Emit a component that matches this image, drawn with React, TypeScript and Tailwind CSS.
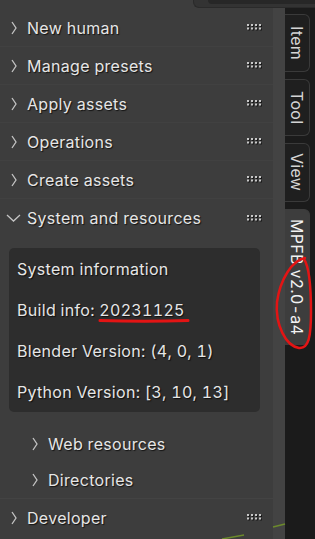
import React from "react";

const Chevron = ({ down = false }: { down?: boolean }) =>
  down ? (
    <svg width="15" height="8" viewBox="0 0 15 8" className="block">
      <polyline points="1,1 7.5,7 14,1" fill="none" stroke="#c4c4c4" strokeWidth="1.3" />
    </svg>
  ) : (
    <svg width="6" height="14" viewBox="0 0 6 14" className="block">
      <polyline points="1,1 5,7 1,13" fill="none" stroke="#c4c4c4" strokeWidth="1.3" />
    </svg>
  );

const Handle = () => (
  <svg width="15" height="7" viewBox="0 0 15 7" className="block">
    {[0, 4, 8, 12].map((x) =>
      [0, 3.5].map((y) => (
        <g key={`${x}-${y}`}>
          <rect x={x + 1} y={y + 1} width="2" height="2" fill="#1a1a1a" />
          <rect x={x} y={y} width="2" height="2" fill="#c8c8c8" />
        </g>
      ))
    )}
  </svg>
);

const txt =
  "text-[16px] tracking-[0.3px] tabular-nums text-[#e6e6e6] leading-none [text-shadow:1px_1px_1px_rgba(0,0,0,0.7)] whitespace-nowrap";

const Row = ({ label, down = false }: { label: string; down?: boolean }) => (
  <div className="flex items-center h-[38px] pr-[11px] border-b border-[#414141]">
    <div className="w-[27px] flex justify-center">
      <Chevron down={down} />
    </div>
    <span className={txt}>{label}</span>
    <div className="flex-1" />
    <Handle />
  </div>
);

const SubRow = ({ label }: { label: string }) => (
  <div className="flex items-center h-[36px] pl-[22px]">
    <div className="w-[26px] flex justify-center">
      <Chevron />
    </div>
    <span className={txt}>{label}</span>
  </div>
);

const Tab = ({ label, h, active = false }: { label: string; h: string; active?: boolean }) => (
  <div
    className={`${h} w-[25px] flex items-center justify-center rounded-r-[6px] border border-l-0 ${
      active ? "bg-[#3d3d3d] border-[#3d3d3d]" : "bg-[#1f1f1f] border-[#3a3a3a]"
    }`}
  >
    <span
      className={`[writing-mode:vertical-rl] text-[16px] tracking-[0.3px] tabular-nums leading-none whitespace-nowrap ${
        active ? "text-[#f2f2f2]" : "text-[#d4d4d4]"
      }`}
    >
      {label}
    </span>
  </div>
);

export default function App() {
  return (
    <div className="w-[315px] h-[539px] overflow-hidden relative flex flex-col bg-[#3d3d3d] font-['Inter',sans-serif]">
      {/* top strip */}
      <div className="h-[8px] flex shrink-0">
        <div className="w-[193px]" />
        <div className="flex-1 bg-[#333333] rounded-bl-[6px] border-b border-l border-[#2a2a2a] flex">
          <div className="w-[14px]" />
          <div className="flex-1 h-[4px] bg-[#272727] rounded-bl-[5px]" />
        </div>
      </div>
      <div className="flex flex-1 min-h-0">
        {/* panel */}
        <div className="w-[273px] flex flex-col pt-[1px]">
          <Row label="New human" />
          <Row label="Manage presets" />
          <Row label="Apply assets" />
          <Row label="Operations" />
          <Row label="Create assets" />
          <div className="flex items-center h-[38px] pr-[11px]">
            <div className="w-[27px] flex justify-center">
              <Chevron down />
            </div>
            <span className={txt}>System and resources</span>
            <div className="flex-1" />
            <Handle />
          </div>
          <div className="mt-[11px] ml-[9px] w-[251px] rounded-[5px] bg-[#2d2d2d] flex flex-col">
            {[
              "System information",
              "Build info: 20231125",
              "Blender Version: (4, 0, 1)",
              "Python Version: [3, 10, 13]",
            ].map((l) => (
              <div key={l} className="h-[41px] flex items-center pl-[8px]">
                <span className={txt}>{l}</span>
              </div>
            ))}
          </div>
          <div className="h-[14px]" />
          <SubRow label="Web resources" />
          <SubRow label="Directories" />
          <div className="flex items-center h-[38px] pr-[11px] border-t border-[#434343]">
            <div className="w-[27px] flex justify-center">
              <Chevron />
            </div>
            <span className={txt}>Developer</span>
            <div className="flex-1" />
            <Handle />
          </div>
        </div>
        {/* viewport gap */}
        <div className="w-[12px] bg-[#434343]" />
        {/* tab column */}
        <div className="w-[30px] bg-[#1b1b1b] flex flex-col pt-[6px] gap-[7px]">
          <Tab label="Item" h="h-[58px]" />
          <Tab label="Tool" h="h-[57px]" />
          <Tab label="View" h="h-[59px]" />
          <Tab label="MPFB v2.0-a4" h="h-[136px]" active />
        </div>
      </div>
      {/* annotations */}
      <svg className="absolute left-0 top-0 pointer-events-none" width="315" height="539" viewBox="0 0 315 539">
        <path d="M100 320.5 Q145 322 188 320.5" fill="none" stroke="#e31414" strokeWidth="3" strokeLinecap="round" />
        <path
          d="M305 258 C292 260 280 280 277 302 C275 325 286 346 299 348 C309 349 311 335 311 312 C311 290 310 268 304 259"
          fill="none"
          stroke="#e31414"
          strokeWidth="2.5"
          strokeLinecap="round"
        />
        <path d="M222 539 L244 535" stroke="#6c8a2c" strokeWidth="1.5" />
        <path d="M273 527 L285 524" stroke="#6c8a2c" strokeWidth="1.5" />
      </svg>
    </div>
  );
}
